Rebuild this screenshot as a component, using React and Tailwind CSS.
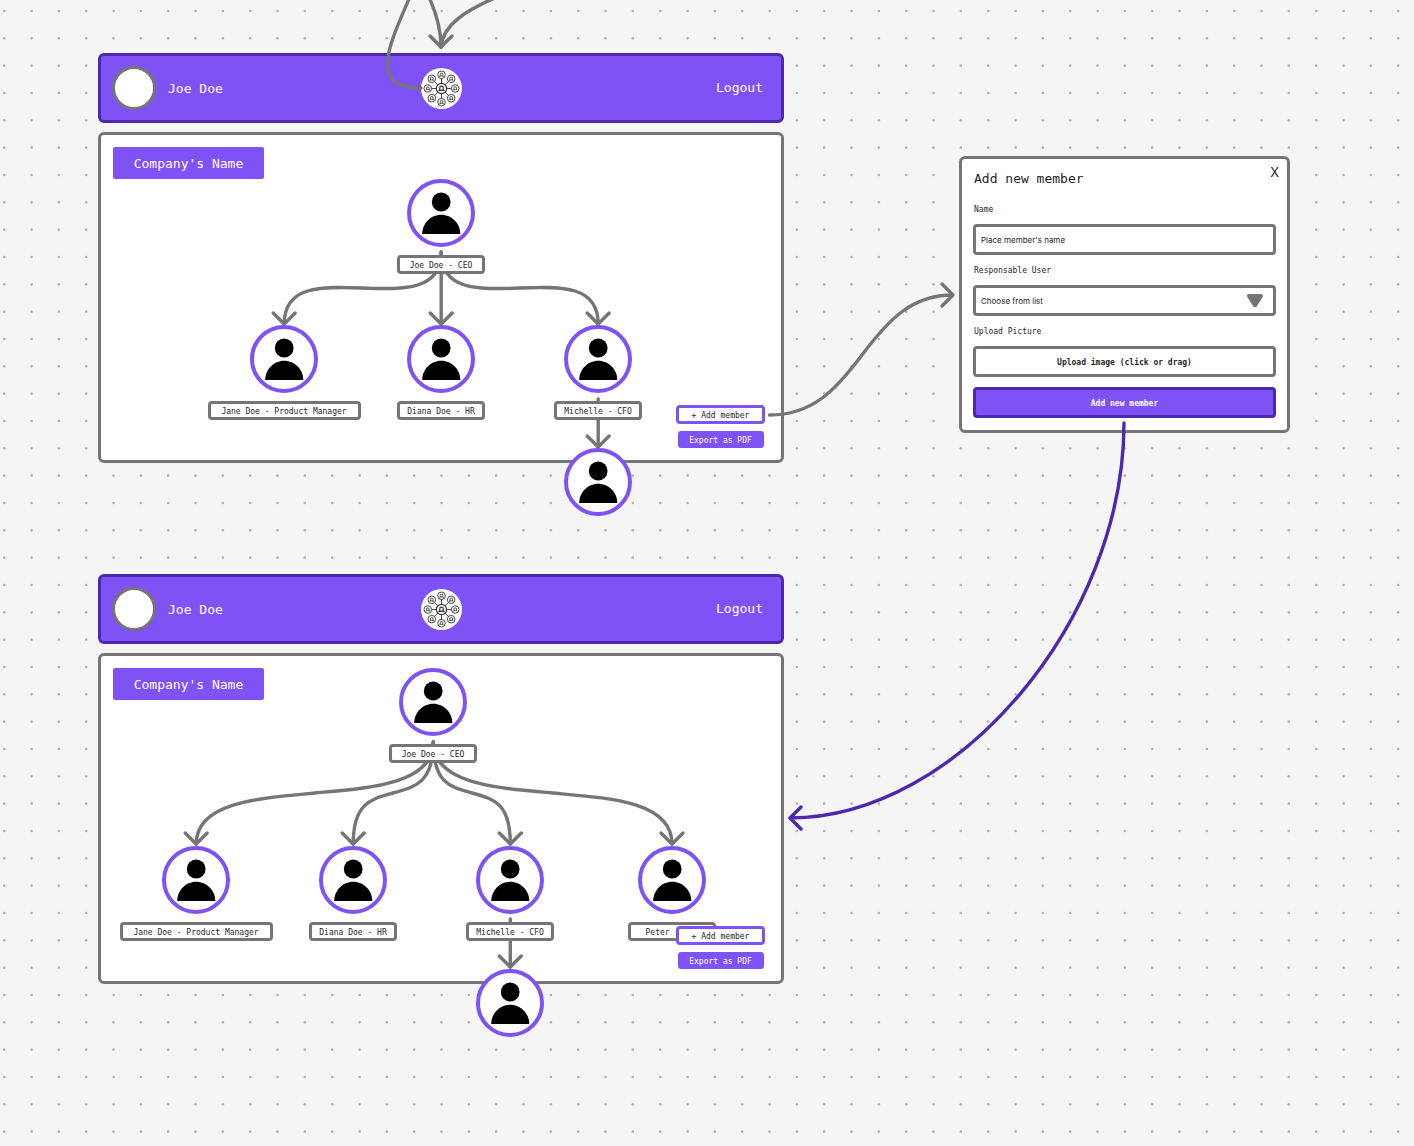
import React from "react";

const mono = "font-[family-name:'DejaVu_Sans_Mono',monospace]";

function DotGrid() {
  const steps = [0, 1, 2];
  return (
    <svg className="absolute inset-0 h-full w-full" aria-hidden="true">
      <defs>
        <pattern id="dots" width="82" height="82" patternUnits="userSpaceOnUse">
          {steps.map((r) =>
            steps.map((c) => (
              <circle key={`${r}-${c}`} cx={4.2 + (c * 82) / 3} cy={11 + (r * 82) / 3} r="1.3" fill="#b3b3b3" />
            ))
          )}
        </pattern>
      </defs>
      <rect width="100%" height="100%" fill="url(#dots)" />
    </svg>
  );
}

function Avatar() {
  return (
    <div className="size-[68px] rounded-full border-4 border-[#7f52f6] bg-white">
      <svg viewBox="4 4 60 60" className="size-full" aria-hidden="true">
        <circle cx="34.2" cy="23" r="9.4" />
        <path d="M15.200 55C15.200 44.500 23.700 35.700 34.200 35.700S53.300 44.500 53.300 55Z" />
      </svg>
    </div>
  );
}

function Node({ label, place, wide }) {
  return (
    <div className={`absolute flex w-40 -translate-x-1/2 flex-col items-center gap-2 ${place}`}>
      <Avatar />
      {label && (
        <div
          className={`flex h-[19px] items-center justify-center rounded-[4px] border-[3px] border-[#757575] bg-white pt-0.5 text-[8px] whitespace-pre ${
            wide ? "w-[153px]" : "w-[88px]"
          }`}
        >
          {label}
        </div>
      )}
    </div>
  );
}

function Stroke({ d, color = "#757575" }) {
  return <path d={d} fill="none" stroke={color} strokeWidth="3.4" strokeLinecap="round" strokeLinejoin="round" />;
}

function down(x, y) {
  return `M${x - 11} ${y - 11}L${x} ${y}L${x + 11} ${y - 11}`;
}

function MiniPerson({ x, y, r }) {
  const k = r / 4;
  return (
    <g transform={`translate(${x} ${y}) scale(${k})`}>
      <circle r="3.800" fill="#fff" />
      <path d="M-1.300 1.100V-0.400A1.300 1.300 0 0 1 1.300 -0.400V1.100" />
      <path d="M-2.200 1.800C-1.500 0.900 1.500 0.900 2.200 1.800" />
    </g>
  );
}

function Logo() {
  const spots = [0, 45, 90, 135, 180, 225, 270, 315].map((a) => {
    const t = (a * Math.PI) / 180;
    return [20.5 + 13.7 * Math.cos(t), 20.5 + 13.7 * Math.sin(t)];
  });
  return (
    <svg viewBox="0 0 41 41" className="relative size-[41px]" role="img" aria-label="Organization logo">
      <circle cx="20.5" cy="20.5" r="20.5" fill="#fff" />
      <g fill="none" stroke="#333" strokeWidth="0.9">
        {spots.map(([x, y]) => (
          <line key={`${x},${y}`} x1="20.5" y1="20.5" x2={x} y2={y} />
        ))}
        {spots.map(([x, y]) => (
          <MiniPerson key={`${x},${y}`} x={x} y={y} r={4} />
        ))}
        <MiniPerson x={20.5} y={20.5} r={5.400} />
      </g>
    </svg>
  );
}

function Header({ children }) {
  return (
    <header className="relative grid h-[70px] grid-cols-3 items-center rounded-[6px] border-[3px] border-[#4e28ac] bg-[#7f52f6] pr-[18px] pl-[11px] text-[13px] text-white">
      <div className="flex items-center gap-3">
        <div className="size-11 rounded-full border-[3px] border-[#757575] bg-white" />
        <span className="pt-0.5">Joe Doe</span>
      </div>
      <div className="flex justify-center pl-2">
        <Logo />
      </div>
      <button type="button" className="justify-self-end">
        Logout
      </button>
      {children}
    </header>
  );
}

function Panel({ children }) {
  return (
    <section className="relative mt-[9px] flex h-[331px] flex-col justify-between rounded-[6px] border-[3px] border-[#757575] bg-white">
      <h2 className="mt-3 ml-3 flex h-8 w-[151px] items-center justify-center rounded-[2px] bg-[#7f52f6] pt-0.5 text-[13px] text-white">
        Company's Name
      </h2>
      <div className="absolute -top-[3px] left-1/2 h-[331px] w-[686px] -translate-x-1/2">{children}</div>
      <div className="relative mr-4 mb-3 flex flex-col items-center gap-[7px] self-end text-[8px]">
        <button type="button" className="h-[19px] w-[89px] rounded-[4px] border-[3px] border-[#7f52f6] bg-white pt-0.5 leading-none">
          + Add member
        </button>
        <button type="button" className="h-[17px] w-[86px] rounded-[3px] bg-[#7f52f6] pt-0.5 leading-none text-white">
          Export as PDF
        </button>
      </div>
    </section>
  );
}

function Wires({ viewBox, paths, tips }) {
  return (
    <svg viewBox={viewBox} className="absolute inset-0 h-full w-full overflow-visible" aria-hidden="true">
      {paths.map((d) => (
        <Stroke key={d} d={d} />
      ))}
      {tips.map(([x, y]) => (
        <Stroke key={`${x},${y}`} d={down(x, y)} />
      ))}
    </svg>
  );
}

function FirstTree() {
  return (
    <>
      <Wires
        viewBox="98 132 686 331"
        paths={[
          "M441.200 252V324",
          "M441.200 252C441.200 290 405 290 362.700 288S284.200 286 284.200 324",
          "M441.200 252C441.200 290 477 290 519.700 288S598.200 286 598.200 324",
          "M598.200 399V447",
        ]}
        tips={[[441.2, 324], [284.2, 324], [598.2, 324], [598.2, 447]]}
      />
      <Node place="left-[343px] top-[47px]" label="Joe Doe - CEO" />
      <Node place="left-[186px] top-[193px]" label="Jane Doe - Product Manager" wide />
      <Node place="left-[343px] top-[193px]" label="Diana Doe - HR" />
      <Node place="left-[500px] top-[193px]" label="Michelle - CFO" />
      <Node place="left-[500px] top-[316px]" />
    </>
  );
}

function SecondTree() {
  return (
    <>
      <Wires
        viewBox="98 653 686 331"
        paths={[
          "M433.300 742C433.300 784 370 788 315 793S196.200 802 196.200 844",
          "M433.300 742C433.300 784 414 787 393 793S353.200 802 353.200 844",
          "M433.300 742C433.300 784 451 787 472 793S510.300 802 510.300 844",
          "M433.300 742C433.300 784 497 788 552.500 793S672 801 672 844",
          "M510.300 919V967",
        ]}
        tips={[[196.2, 844], [353.2, 844], [510.3, 844], [672, 844], [510.3, 967]]}
      />
      <Node place="left-[335px] top-[15px]" label="Joe Doe - CEO" />
      <Node place="left-[98px] top-[193px]" label="Jane Doe - Product Manager" wide />
      <Node place="left-[255px] top-[193px]" label="Diana Doe - HR" />
      <Node place="left-[412px] top-[193px]" label="Michelle - CFO" />
      <Node place="left-[574px] top-[193px]" label="Peter - CTO" />
      <Node place="left-[412px] top-[316px]" />
    </>
  );
}

const field = "h-[31px] w-full rounded-[4px] border-[3px] border-[#757575] bg-white";

function MemberForm() {
  return (
    <form
      onSubmit={(e) => e.preventDefault()}
      className="relative mt-[156px] w-[331px] shrink-0 rounded-[6px] border-[3px] border-[#757575] bg-white px-[11px] pt-3 pb-3 text-[8px]"
    >
      <button
        type="button"
        aria-label="Close"
        className="absolute top-[3px] right-2 font-[family-name:Inter,sans-serif] text-[13px] leading-5"
      >
        X
      </button>
      <h2 className="pl-px text-[13px] leading-4">Add new member</h2>
      <label htmlFor="name" className="mt-4 block h-[21px] pl-px leading-[14px]">
        Name
      </label>
      <input
        id="name"
        placeholder="Place member's name"
        className={`${field} block px-[5px] font-[family-name:Inter,sans-serif] placeholder:text-[#1e1e1e]`}
      />
      <label htmlFor="user" className="mt-[9px] block h-[21px] pl-px leading-[14px]">
        Responsable User
      </label>
      <div className="relative">
        <select id="user" className={`${field} block appearance-none px-[5px] font-[family-name:Inter,sans-serif]`}>
          <option>Choose from list</option>
        </select>
        <svg viewBox="0 0 18 15" className="pointer-events-none absolute top-2 right-3 h-[15px] w-[18px]" aria-hidden="true">
          <path d="M3 3H15L9.300 12Q9 12.300 8.700 12Z" fill="#757575" stroke="#757575" strokeWidth="4" strokeLinejoin="round" />
        </svg>
      </div>
      <label htmlFor="upload" className="mt-[9px] block h-[21px] pl-px leading-[14px]">
        Upload Picture
      </label>
      <button id="upload" type="button" className={`${field} block pt-0.5 font-bold`}>
        Upload image (click or drag)
      </button>
      <button
        type="submit"
        className="mt-[10px] block h-[31px] w-full rounded-[4px] border-[3px] border-[#4e28ac] bg-[#7f52f6] pt-0.5 font-bold text-white"
      >
        Add new member
      </button>
      <svg
        viewBox="959 156 331 278"
        className="pointer-events-none absolute -top-[3px] -left-[3px] h-[278px] w-[331px] overflow-visible"
        aria-hidden="true"
      >
        <Stroke d="M769.500 415C812 415 835 391 862 355S912 295 953 295M942 284L953 295L942 306" />
        <Stroke color="#4e28ac" d="M1124 423C1124 620.500 957 818 790 818M801 807L790 818L801 829" />
      </svg>
    </form>
  );
}

export default function App() {
  return (
    <main className={`relative min-h-screen overflow-hidden bg-[#f5f5f5] text-[#1e1e1e] ${mono}`}>
      <DotGrid />
      <div className="relative flex items-start gap-[175px] pr-[124px] pl-[98px]">
        <div className="min-w-0 flex-1 pt-[53px] pb-[162px]">
          <Header>
            <svg
              viewBox="341 0 200 120"
              className="pointer-events-none absolute -top-14 left-1/2 h-[120px] w-[200px] -translate-x-1/2 overflow-visible"
              aria-hidden="true"
            >
              <Stroke d="M412 -8C400 20 388 45 387.500 63C387 82 400 88 421 88" />
              <Stroke d="M428 -5C437 14 441 30 441 47" />
              <Stroke d="M502 -5C465 10 443 25 441 47" />
              <Stroke d={down(441, 47)} />
            </svg>
          </Header>
          <Panel>
            <FirstTree />
          </Panel>
          <div className="h-[111px]" />
          <Header />
          <Panel>
            <SecondTree />
          </Panel>
        </div>
        <MemberForm />
      </div>
    </main>
  );
}
